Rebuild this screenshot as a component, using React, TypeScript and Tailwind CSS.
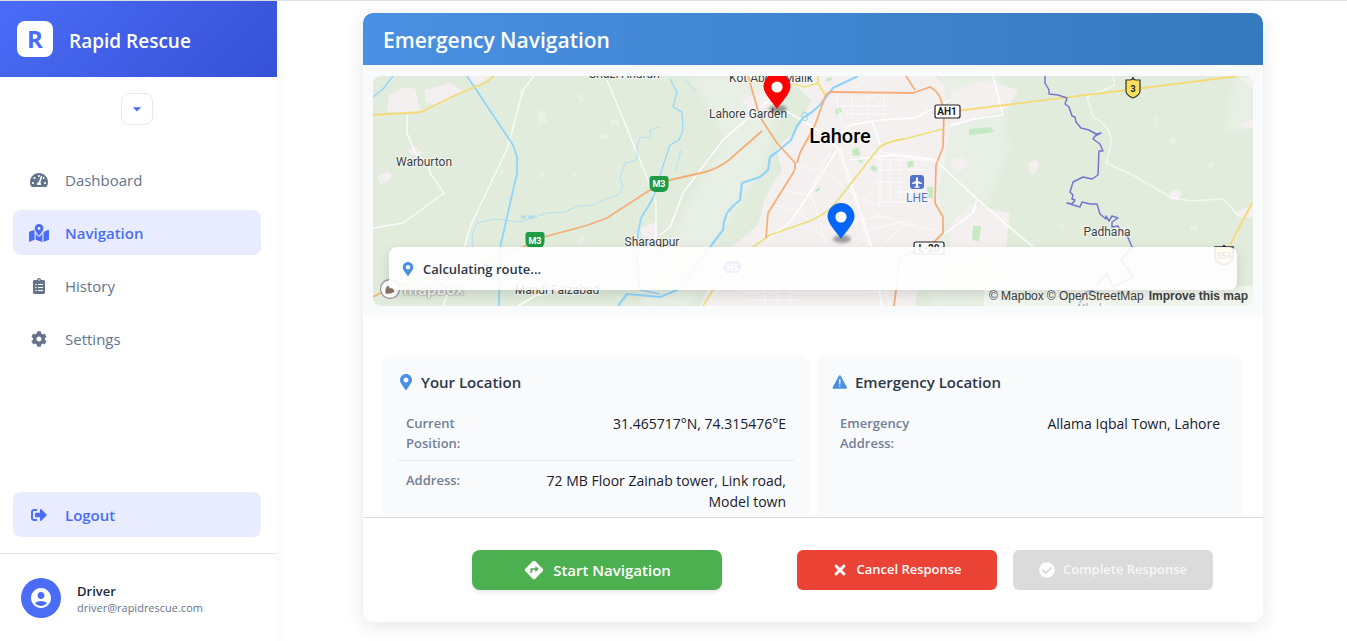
import React from "react";
import {
  FaTachometerAlt,
  FaMapMarkedAlt,
  FaClipboardList,
  FaCog,
  FaSignOutAlt,
  FaMapMarkerAlt,
  FaTimes,
  FaCheckCircle,
} from "react-icons/fa";
import { MdAccountCircle, MdArrowDropDown, MdDirections } from "react-icons/md";
import { IoWarning } from "react-icons/io5";

const NAV_ITEMS = [
  { label: "Dashboard", icon: FaTachometerAlt, active: false },
  { label: "Navigation", icon: FaMapMarkedAlt, active: true },
  { label: "History", icon: FaClipboardList, active: false },
  { label: "Settings", icon: FaCog, active: false },
];

function Sidebar() {
  return (
    <aside className="flex w-[277px] shrink-0 flex-col bg-white shadow-[0_0_15px_rgba(0,0,0,0.05)]">
      <div className="flex h-19 items-center gap-4 bg-linear-135 from-[#4a6cf7] to-[#3651d4] px-[17px]">
        <span className="flex size-9 items-center justify-center rounded-lg bg-white text-[24px] font-bold text-[#4a6cf7]">
          R
        </span>
        <span className="pt-1 text-[19px] font-semibold text-white">Rapid Rescue</span>
      </div>
      <div className="flex justify-center pt-4 pr-1">
        <button
          type="button"
          aria-label="Toggle menu"
          className="flex size-8 items-center justify-center rounded-lg border border-[#e6e8ec] bg-white text-[#4a6cf7]"
        >
          <MdArrowDropDown size={20} />
        </button>
      </div>
      <nav className="flex flex-1 flex-col gap-2 pt-8 pr-4 pl-[13px]">
        {NAV_ITEMS.map(({ label, icon: Icon, active }) => (
          <a
            key={label}
            href="#"
            className={
              active
                ? "flex h-[45px] items-center gap-4 rounded-lg bg-[#e9ecfe] px-4 text-[15px] font-semibold text-[#4a6cf7]"
                : "flex h-[45px] items-center gap-4 rounded-lg px-4 text-[15px] text-[#64748b]"
            }
          >
            <Icon size={active ? 18 : 16} className="w-5" />
            <span className="pt-0.5">{label}</span>
          </a>
        ))}
      </nav>
      <div className="border-b border-[#e4e6ea] pr-4 pb-4 pl-[13px]">
        <button
          type="button"
          className="flex h-[45px] w-full items-center gap-4 rounded-lg bg-[#e9ecfe] px-4 text-[15px] font-semibold text-[#4a6cf7]"
        >
          <FaSignOutAlt size={16} className="w-5" />
          <span className="pt-0.5">Logout</span>
        </button>
      </div>
      <div className="flex items-center gap-4 px-[21px] pt-6 pb-[23px]">
        <span className="flex size-10 items-center justify-center rounded-full bg-[#4a6cf7] text-white">
          <MdAccountCircle size={24} />
        </span>
        <div className="flex flex-col pt-0.5">
          <span className="text-[13px] leading-[18px] font-semibold text-[#1e293b]">Driver</span>
          <span className="text-[11px] leading-4 text-[#64748b]">driver@rapidrescue.com</span>
        </div>
      </div>
    </aside>
  );
}

function Marker({ x, y, color }: { x: number; y: number; color: string }) {
  return (
    <g transform={`translate(${x} ${y})`}>
      <ellipse cx="1" cy="0" rx="9" ry="4" fill="#000" opacity="0.35" filter="url(#soft)" />
      <path d="M0 0C-3.500 -6 -13.500 -15 -13.500 -22.500A13.500 13.500 0 0 1 13.500 -22.500C13.500 -15 3.500 -6 0 0Z" fill={color} />
      <circle cy="-22" r="5.600" fill="#fff" />
    </g>
  );
}

function MapCanvas() {
  return (
    <svg
      viewBox="373 76 880 230"
      preserveAspectRatio="xMidYMid slice"
      className="block h-[230px] w-full"
      role="img"
      aria-label="Map of Lahore"
    >
      <defs>
        <filter id="soft" x="-50%" y="-100%" width="200%" height="300%">
          <feGaussianBlur stdDeviation="1.5" />
        </filter>
        <filter id="haze" x="-10%" y="-10%" width="120%" height="120%">
          <feGaussianBlur stdDeviation="3" />
        </filter>
      </defs>
      <rect x="373" y="76" width="880" height="230" fill="#e1ecdd" />

      {/* lighter farmland */}
      <g fill="#e8efe4" filter="url(#haze)">
        <path d="M690 76H790L765 165L720 235L690 306H640L690 200L725 140Z" />
        <path d="M940 76H1000L1010 150L985 210L1020 306H930Z" />
        <path d="M1235 76h18v50l-30 10z" />
      </g>

      {/* built-up areas */}
      <g fill="#f4f0f0">
        <path d="M783 76H935L944 84L950 130L944 165L938 190L944 235L925 260L915 306H700L722 255L758 225L766 195L782 170L776 150L800 125L812 100Z" />
        <path d="M950 92L985 80L1018 90L1008 108L975 120L950 128Z" />
        <path d="M950 160l14-4 5 8-13 10zM950 225l20-20 40 8-4 34 -56 18z" />
        <path d="M387 112l2-17 14-8 12 2 6 24zM425 90l25-7 12 8 -25 15 -12-5zM468 76h22l-12 9-10-3z" />
        <path d="M407 150l8-4 8 7-10 3zM377 176l10-4 5 2-4 8-8 2z" />
        <path d="M1028 163l7-3 4 3-3 10-5 2zM1170 192l8-3 4 5-5 6-7-1zM1233 212l20-6v12l-14-1zM1240 124l13-5v8l-10 2zM1240 77l13 2v10z" />
        <path d="M640 228l16-6 2 18-14 1zM741 100l24-10 8 14-20 12z" />
      </g>
      <g fill="#ebf0e7">
        <path d="M537 112l8-2 2 12-9 2zM578 96l5-2 1 7-4 1zM611 120l9-1-1 6-8 1zM600 134l7-1 1 5-8 1zM540 173l5-1v5l-5 1zM572 174l8-1-5 4zM500 172l4-2v4l-4 1zM578 238l7-2-2 7-6 1zM519 91l4-3 1 5-5 1zM1155 118l3-1-1 8-3 1zM1170 138l7-1-2 8-5-1zM1208 163l6-1v5l-6 1zM1190 226l9-1-2 5-7 1zM1060 222l5 3-2 6-4-3z" />
      </g>

      {/* parks */}
      <g fill="#c5e9c3">
        <path d="M835 110l5-3 2 5-6 3zM852 150l6-3 3 8-8 1zM856 157l7 4-2 3zM872 165l6 3-3 4-5-3zM907 162l6-2 1 6-6 2zM927 187h6v12l-6-2zM815 190l5-3v3l-4 2zM969 129l22-2 3 5-14 2-11 1zM973 226h8l-2 15-7-1zM826 79l5-2 1 3-5 2z" />
      </g>

      {/* city streets */}
      <g fill="none" stroke="#fff" strokeWidth="1" opacity="0.65">
        <path d="M836 96L841 120M852 95V118M868 95V122M884 96V122M838 106H888M845 114H888M860 100L890 92M855 88L866 78" />
        <path d="M878 160H930M880 170H925M880 150V206M890 160V206M900 158V200M870 192H928M875 182H905M878 202H925M910 190V200" />
        <path d="M797 165L825 172L850 192L880 206M785 190L812 196M800 210L830 152M812 196L828 250M775 205L800 212L826 240M867 150L930 158M837 148L850 186L870 247" />
        <path d="M845 225L880 215L920 230M855 247L870 230L900 222L935 230M880 247L905 225M890 306L885 292M740 292H890M750 300H800M765 290V304M778 290V304M790 288V304" />
      </g>
      <g fill="none" stroke="#fff" strokeWidth="1.500">
        <path d="M828 145L850 125L880 120L915 118L950 100M785 110L815 128L840 150M837 150L812 190L790 222L770 237M840 150L855 195L872 247L882 306M850 160L890 155L935 160L977 199L1033 247M880 145L872 120M950 125L975 119L1003 115L993 76M773 97L723 140L683 193L670 227L660 235M943 235L973 213L977 199" />
        <path d="M607 80L651 187L656 203V237M443 306L463 253L470 227L508 147L523 90L534 76M407 115V133L415 153L428 163L430 173L444 193L403 223L373 228" opacity="0.8" />
        <path d="M1113 76L1115 85L1087 97L1093 117C1105 124 1112 130 1111 145L1106 163L1133 175L1170 197L1190 201L1223 199L1240 217" opacity="0.6" />
        <path d="M518 306L535 296L580 284L640 262L656 237M1033 247L1090 290" />
      </g>

      {/* rivers and canals */}
      <g fill="none" stroke="#8fd5fb" strokeLinejoin="round">
        <path d="M467 76L513 145L517 157V173L500 248L499 306" strokeWidth="1.800" />
        <path d="M393 76L383 89L373 97" strokeWidth="1.300" />
        <path d="M858 76L833 88L820 105L812 112L803 118L797 126L791 140L778 151L770 157L768 170L760 177L742 183L740 200L733 206L727 213L724 222L723 230L710 247L690 275L677 290L660 297L627 294L618 306" strokeWidth="2.200" />
        <path d="M804 121l-3-6 3-3 4 2-1 6z" strokeWidth="1" />
        <path d="M657 187L652 200L641 218L638 233L637 260L640 290L660 294" strokeWidth="1.600" />
        <path d="M670 79L677 92L673 107L682 112L683 130L679 140L670 145L666 157L661 172L657 187" strokeWidth="1.100" />
        <path d="M473 247L472 235L477 223L495 219L520 222L547 213L565 212L578 206L593 205L606 199L618 195L623 187L620 178L625 163L637 160L637 147L640 137L650 138L650 130L660 127M684 78L697 93M681 150L676 170" strokeWidth="0.800" opacity="0.7" />
        <path d="M521 217h5m2 0h6" strokeWidth="3" opacity="0.6" />
      </g>

      {/* main roads */}
      <g fill="none" strokeLinejoin="round" strokeWidth="1.800">
        <g stroke="#f5d976">
          <path d="M373 115L407 113L421 112L460 93L487 82L494 76" />
          <path d="M948 112L1143 88L1238 76M1252 203L1230 245" />
        </g>
        <path stroke="#ebe07a" d="M943 129L904 139Q884 142 878 149L833 206Q827 213 810 221L770 235L753 247L722 275L703 306M793 84L805 87L818 83L825 95M818 76V83" />
        <g stroke="#f6ae78">
          <path d="M373 297L390 288L470 268L523 247L540 238L585 226L607 218L650 190L670 180L705 172Q717 169 729 160L762 131" />
          <path d="M748 76L760 117L777 143L795 163Q796 168 793 173L768 213L766 238" />
          <path d="M797 163L800 153L815 125L825 97Q827 92 832 92L913 93L930 87Q936 90 940 97L944 110L943 147L936 165L935 203L943 217V233L933 243L900 257L894 306M906 76L915 90" />
        </g>
      </g>

      {/* national border */}
      <path
        d="M1045 76V83L1049 90V94L1058 95L1067 98L1065 104L1069 107L1072 116L1075 117L1076 122L1081 128L1089 130L1096 134L1101 133L1095 136L1093 139L1100 144L1103 151H1099L1098 175L1092 179L1083 177L1073 182L1070 192L1073 195L1072 199L1075 200L1072 204L1067 203L1080 207L1082 202L1090 204L1097 204L1100 214L1106 219V216L1109 221L1112 216L1118 218L1112 222V227L1118 226L1120 230L1126 233L1132 247L1121 260L1133 277L1113 287L1107 273L1093 290L1086 292L1078 306"
        fill="none"
        stroke="#7377cf"
        strokeWidth="1.500"
        strokeLinejoin="round"
      />

      {/* place names */}
      <g
        fontFamily="Roboto, 'Liberation Sans', sans-serif"
        fontSize="12"
        fill="#3f3f3f"
        textAnchor="middle"
        stroke="#fff"
        strokeOpacity="0.6"
        strokeWidth="2"
        paintOrder="stroke"
      >
        <text x="424" y="166">Warburton</text>
        <text x="652" y="246">Sharaqpur</text>
        <text x="557" y="294">Mandi Faizabad</text>
        <text x="624" y="78">Ghazi Andrun</text>
        <text x="771" y="82">Kot Abdul Malik</text>
        <text x="748" y="118">Lahore Garden</text>
        <text x="1107" y="236">Padhana</text>
        <text x="1095" y="313">Khalra</text>
        <text x="840" y="143" fontSize="20" fontWeight="500" fill="#000">Lahore</text>
        <text x="917" y="202" fill="#5571cf">LHE</text>
      </g>
      <g>
        <rect x="910" y="175" width="14" height="14" rx="3" fill="#5571cf" />
        <path d="M917 177L918 178V181L922 183V184L918 183.500V186L919.500 187V187.800H914.500V187L916 186V183.500L912 184V183L916 181V178Z" fill="#fff" />
      </g>

      {/* road shields */}
      <g fontFamily="Roboto, 'Liberation Sans', sans-serif" fontSize="9" fontWeight="700" textAnchor="middle">
        <path d="M652 176h14q2 0 2.500 2v7q0 7-6 7h-7q-6 0-6-7v-7q0.500-2 2.500-2z" fill="#1d9b46" />
        <text x="659" y="187" fill="#fff">M3</text>
        <path d="M528 232h14q2 0 2.500 2v7q0 7-6 7h-7q-6 0-6-7v-7q0.500-2 2.500-2z" fill="#1d9b46" />
        <text x="535" y="244" fill="#fff">M3</text>
        <rect x="935" y="105" width="25" height="13" rx="2" fill="#fff" stroke="#222" strokeWidth="1.200" />
        <text x="947" y="115" fill="#222" fontSize="10">AH1</text>
        <rect x="914" y="242" width="30" height="12" rx="2" fill="#fff" stroke="#222" strokeWidth="1.200" />
        <text x="929" y="251.500" fill="#222" fontSize="10">L-20</text>
        <path d="M1126 80h4q3 0 3-3q0 3 3 3h4v11q0 4-7 7q-7-3-7-7z" fill="#fbdf5c" stroke="#333" strokeWidth="1.200" />
        <text x="1133" y="91.500" fill="#222">3</text>
        <path d="M1215 247h6q3 0 3-2q0 2 3 2h6v11q0 4-9 7q-9-3-9-7z" fill="#fbdf5c" stroke="#333" strokeWidth="1.500" />
        <text x="1224" y="259" fill="#222">354</text>
        <path d="M723 267l4-6h11l4 6-4 6h-11z" fill="#5571cf" />
        <text x="732.500" y="270.500" fill="#fff">N5</text>
      </g>

      <Marker x={777} y={109} color="#ff0000" />
      <Marker x={841} y={239} color="#0565f8" />
    </svg>
  );
}

function MapPanel() {
  return (
    <div className="bg-[#f8fafc] px-2.5 pt-[11px] pb-2.5">
      <div className="relative overflow-hidden rounded-lg">
        <MapCanvas />
        <div className="absolute bottom-1.5 left-1.5 flex items-center gap-0.5">
          <svg viewBox="0 0 22 22" className="size-[22px]" aria-hidden="true">
            <circle cx="11" cy="11" r="9.500" fill="#fff" stroke="#9a9a96" strokeWidth="1.300" />
            <path d="M6.500 15.500C6 11.500 7 9 9 7.500L11 10.500L13.500 10L15.500 13.500C13 15.800 9 16 6.500 15.500Z" fill="#8a7468" />
          </svg>
          <span className="[font-family:Roboto,sans-serif] text-[17px] leading-5 font-bold text-white/90 [text-shadow:0_0_2px_#777,0_0_1px_#777]">
            mapbox
          </span>
        </div>
        <div className="absolute right-0 bottom-0 flex h-5 items-center gap-[5px] bg-white/50 px-[5px] [font-family:'Liberation_Sans',sans-serif] text-[12px] text-[#404040]">
          <span className="flex gap-[3px]">
            <a href="#">© Mapbox</a>
            <a href="#">© OpenStreetMap</a>
          </span>
          <a href="#" className="font-bold">Improve this map</a>
        </div>
        <div className="absolute inset-x-4 bottom-4 flex h-[43px] items-center gap-2 rounded-lg bg-white/90 px-3 text-[13px] font-semibold text-[#2d3748] shadow-[0_4px_12px_rgba(0,0,0,0.12)]">
          <FaMapMarkerAlt size={14} className="text-[#4a90e2]" />
          <span className="pt-0.5">Calculating route...</span>
        </div>
      </div>
    </div>
  );
}

type Detail = { label: string; value: string };

function LocationCard({ title, icon, rows }: { title: string; icon: React.ReactNode; rows: Detail[] }) {
  return (
    <section className="min-h-[180px] flex-1 rounded-lg bg-[#f8fafc] px-[15px] pt-4 pb-4">
      <h2 className="flex h-5 items-center gap-[7px] text-[15px] font-semibold text-[#2d3748]">
        <span className="flex w-4 justify-center text-[#4a90e2]">{icon}</span>
        {title}
      </h2>
      <dl className="mt-3">
        {rows.map((row) => (
          <div
            key={row.label}
            className="flex justify-between border-b border-[#e2e8f0] px-2 pt-[9px] pb-[7px] last:border-b-0"
          >
            <dt className="w-[100px] text-[13px] leading-5 font-semibold text-[#718096]">{row.label}</dt>
            <dd className="w-[256px] text-right text-[14px] leading-[21px] text-[#1a202c]">{row.value}</dd>
          </div>
        ))}
      </dl>
    </section>
  );
}

export default function App() {
  return (
    <div className="flex h-screen border-t border-[#dfe3e8] bg-white [font-family:'Open_Sans','Noto_Sans',sans-serif]">
      <Sidebar />
      <main className="min-w-0 flex-1 pt-3 pb-[19px] pl-0.5">
        <div className="mx-auto flex h-full max-w-[900px] flex-col overflow-hidden rounded-[10px] bg-white shadow-[0_4px_20px_rgba(0,0,0,0.1)]">
          <header className="flex h-[52px] shrink-0 items-center bg-linear-to-r from-[#4a90e2] to-[#357abd] px-5">
            <h1 className="pt-1 text-[21px] font-semibold text-white">Emergency Navigation</h1>
          </header>
          <MapPanel />
          <div className="flex min-h-0 flex-1 gap-2 overflow-hidden px-5 pt-10">
            <LocationCard
              title="Your Location"
              icon={<FaMapMarkerAlt size={16} />}
              rows={[
                { label: "Current Position:", value: "31.465717°N, 74.315476°E" },
                { label: "Address:", value: "72 MB Floor Zainab tower, Link road, Model town" },
              ]}
            />
            <LocationCard
              title="Emergency Location"
              icon={<IoWarning size={18} className="shrink-0" />}
              rows={[{ label: "Emergency Address:", value: "Allama Iqbal Town, Lahore" }]}
            />
          </div>
          <footer className="flex shrink-0 justify-center gap-[75px] border-t border-[#dcdcdc] py-8 pl-[59px]">
            <button
              type="button"
              className="flex h-10 w-[250px] items-center justify-center gap-2 rounded-lg bg-[#4caf50] text-[15px] font-semibold text-white shadow-[0_2px_4px_rgba(0,0,0,0.1)]"
            >
              <MdDirections size={22} />
              Start Navigation
            </button>
            <div className="flex gap-4">
              <button
                type="button"
                className="flex h-10 w-[200px] items-center justify-center gap-2 rounded-md bg-[#ea4335] text-[13px] font-semibold text-white"
              >
                <FaTimes size={16} />
                Cancel Response
              </button>
              <button
                type="button"
                disabled
                className="flex h-10 w-[200px] items-center justify-center gap-2 rounded-md bg-[#dbdbdb] text-[13px] font-semibold text-[#f6f6f6]"
              >
                <FaCheckCircle size={16} className="text-white" />
                Complete Response
              </button>
            </div>
          </footer>
        </div>
      </main>
    </div>
  );
}
